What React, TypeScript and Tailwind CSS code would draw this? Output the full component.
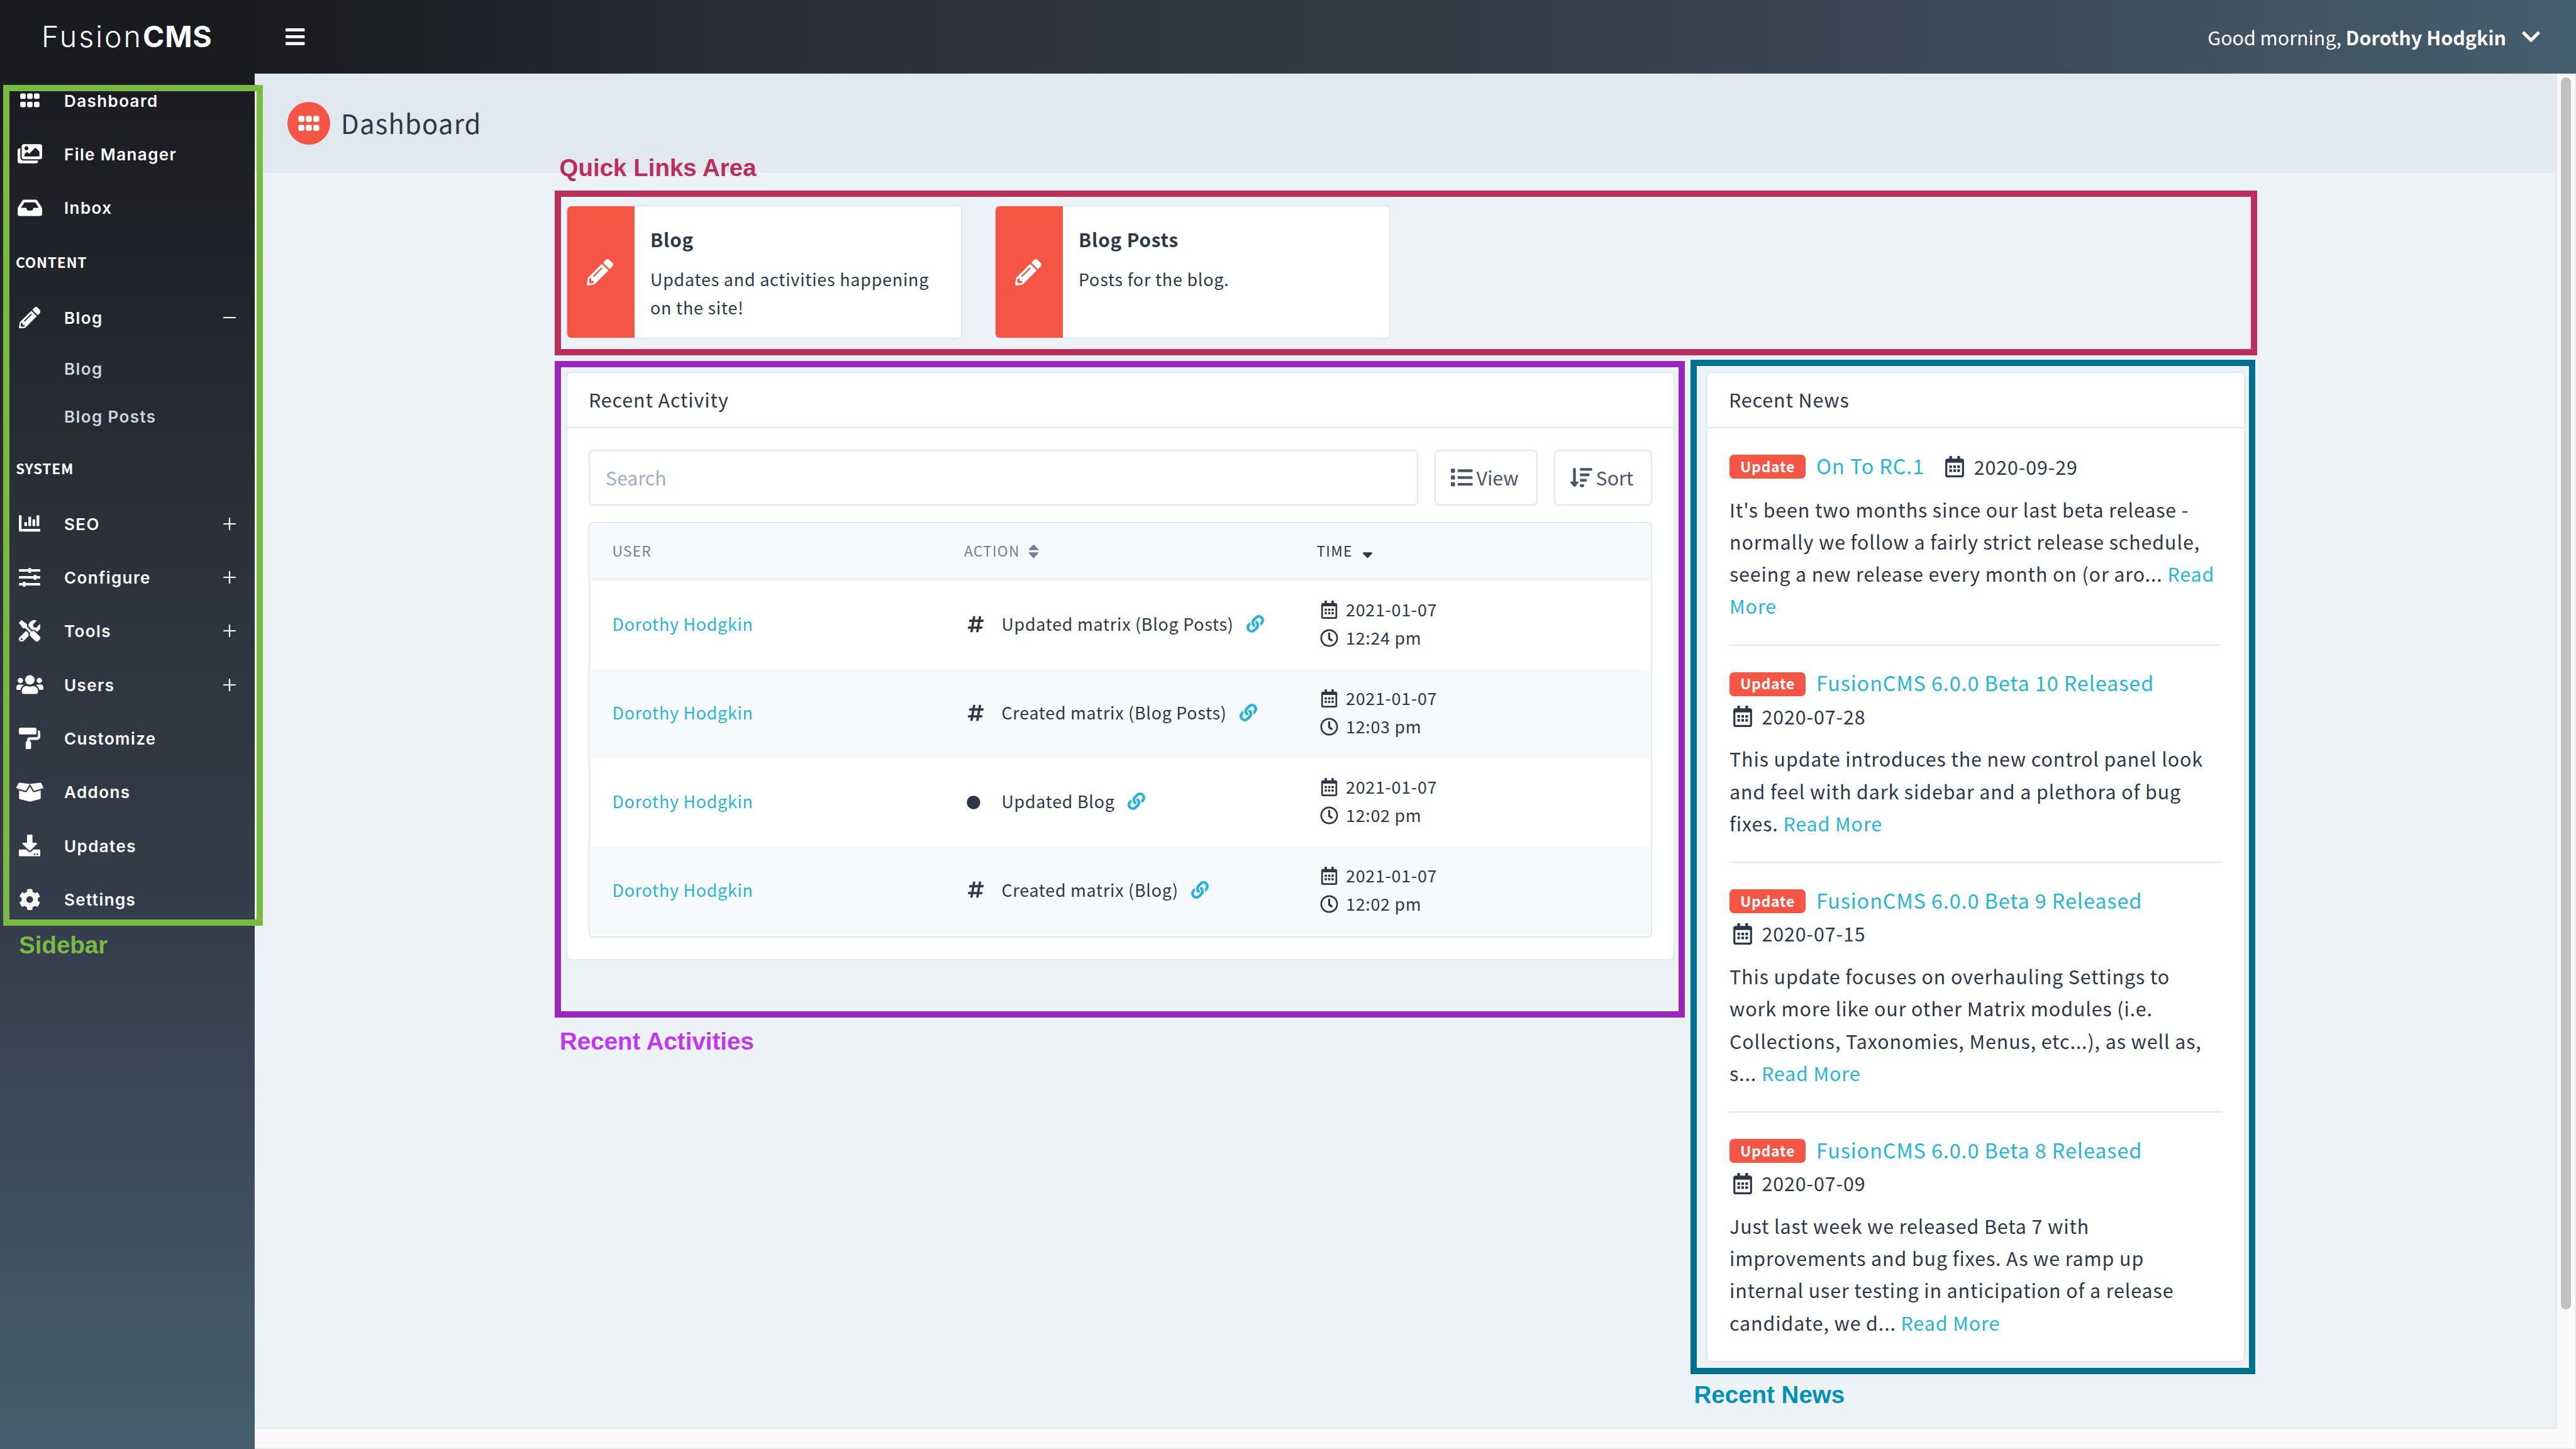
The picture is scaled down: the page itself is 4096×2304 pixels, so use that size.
import type { ReactNode } from "react";
import {
  FaBars,
  FaBoxOpen,
  FaChartBar,
  FaChevronDown,
  FaCircle,
  FaCog,
  FaDownload,
  FaGripHorizontal,
  FaHashtag,
  FaImages,
  FaInbox,
  FaLink,
  FaList,
  FaPaintRoller,
  FaPencilAlt,
  FaRegCalendarAlt,
  FaRegClock,
  FaSort,
  FaSortAmountDown,
  FaSortDown,
  FaTools,
  FaUsers,
} from "react-icons/fa";

type NavEntry = {
  label: string;
  icon: ReactNode;
  toggle?: "open" | "closed";
  children?: string[];
};

type Activity = {
  icon: "hash" | "dot";
  action: string;
  date: string;
  time: string;
};

type NewsEntry = {
  title: string;
  date: string;
  body: string;
};

const user = "Dorothy Hodgkin";

function SlidersIcon() {
  return (
    <svg viewBox="0 0 34 30" className="h-[30px] w-[34px]" fill="currentColor">
      <rect x="0" y="2" width="34" height="4" rx="1" />
      <rect x="0" y="13" width="34" height="4" rx="1" />
      <rect x="0" y="24" width="34" height="4" rx="1" />
      <rect x="15" y="0" width="4.4" height="8" rx="1" />
      <rect x="23.6" y="11" width="4.4" height="8" rx="1" />
      <rect x="6.4" y="22" width="4.4" height="8" rx="1" />
    </svg>
  );
}

const mainNav: NavEntry[] = [
  { label: "Dashboard", icon: <FaGripHorizontal className="size-[35px]" /> },
  { label: "File Manager", icon: <FaImages className="size-[39px]" /> },
  { label: "Inbox", icon: <FaInbox className="size-[39px]" /> },
];

const contentNav: NavEntry[] = [
  {
    label: "Blog",
    icon: <FaPencilAlt className="size-[34.6px]" />,
    toggle: "open",
    children: ["Blog", "Blog Posts"],
  },
];

const systemNav: NavEntry[] = [
  { label: "SEO", icon: <FaChartBar className="size-[34.6px]" />, toggle: "closed" },
  { label: "Configure", icon: <SlidersIcon />, toggle: "closed" },
  { label: "Tools", icon: <FaTools className="size-[34.6px]" />, toggle: "closed" },
  { label: "Users", icon: <FaUsers className="size-[43px]" />, toggle: "closed" },
  { label: "Customize", icon: <FaPaintRoller className="size-[34.6px]" /> },
  { label: "Addons", icon: <FaBoxOpen className="size-[43px]" /> },
  { label: "Updates", icon: <FaDownload className="size-[34.6px]" /> },
  { label: "Settings", icon: <FaCog className="size-[34.6px]" /> },
];

const quickLinks = [
  { title: "Blog", text: "Updates and activities happening on the site!" },
  { title: "Blog Posts", text: "Posts for the blog." },
];

const activities: Activity[] = [
  { icon: "hash", action: "Updated matrix (Blog Posts)", date: "2021-01-07", time: "12:24 pm" },
  { icon: "hash", action: "Created matrix (Blog Posts)", date: "2021-01-07", time: "12:03 pm" },
  { icon: "dot", action: "Updated Blog", date: "2021-01-07", time: "12:02 pm" },
  { icon: "hash", action: "Created matrix (Blog)", date: "2021-01-07", time: "12:02 pm" },
];

const news: NewsEntry[] = [
  {
    title: "On To RC.1",
    date: "2020-09-29",
    body: "It's been two months since our last beta release - normally we follow a fairly strict release schedule, seeing a new release every month on (or aro...",
  },
  {
    title: "FusionCMS 6.0.0 Beta 10 Released",
    date: "2020-07-28",
    body: "This update introduces the new control panel look and feel with dark sidebar and a plethora of bug fixes.",
  },
  {
    title: "FusionCMS 6.0.0 Beta 9 Released",
    date: "2020-07-15",
    body: "This update focuses on overhauling Settings to work more like our other Matrix modules (i.e. Collections, Taxonomies, Menus, etc...), as well as, s...",
  },
  {
    title: "FusionCMS 6.0.0 Beta 8 Released",
    date: "2020-07-09",
    body: "Just last week we released Beta 7 with improvements and bug fixes. As we ramp up internal user testing in anticipation of a release candidate, we d...",
  },
];

function Toggle({ state }: { state: "open" | "closed" }) {
  return (
    <svg viewBox="0 0 20 20" className="ml-auto size-5" stroke="currentColor" strokeWidth="2.2" strokeLinecap="round">
      <path d="M1 10h18" />
      {state === "closed" && <path d="M10 1v18" />}
    </svg>
  );
}

function NavList({ items }: { items: NavEntry[] }) {
  return (
    <ul className="font-['Inter',sans-serif] text-[26px] font-semibold tracking-[1.4px]">
      {items.map((item) => (
        <li key={item.label}>
          <a className="flex h-[85.33px] items-center pr-[30px] pl-5">
            <span className="flex w-[54px] shrink-0 justify-center">{item.icon}</span>
            <span className="ml-[28px] pt-px">{item.label}</span>
            {item.toggle && <Toggle state={item.toggle} />}
          </a>
          {item.children && (
            <ul className="text-[#cbd5e0]">
              {item.children.map((child) => (
                <li key={child} className="flex h-[76.6px] items-center pt-px pl-[102px]">
                  {child}
                </li>
              ))}
            </ul>
          )}
        </li>
      ))}
    </ul>
  );
}

function NavHeading({ children }: { children: ReactNode }) {
  return (
    <h2 className="flex h-[89.2px] items-center pl-[25px] text-[22.8px] font-bold tracking-[0.7px] uppercase">
      {children}
    </h2>
  );
}

function Sidebar() {
  return (
    <aside className="h-full w-[405px] shrink-0 bg-[linear-gradient(to_bottom,#1a1b1f_5%,#262a31_27%,#2e343e_42%,#353d4c_64%,#455d6c_98%)] text-white">
      <div className="flex h-[117px] items-center pl-[66px] font-['Inter',sans-serif] text-[46.5px] leading-none">
        <span className="font-light tracking-[3px]">Fusion</span>
        <span className="font-bold tracking-[0.8px]">CMS</span>
      </div>
      <nav>
        <NavList items={mainNav} />
        <NavHeading>Content</NavHeading>
        <NavList items={contentNav} />
        <NavHeading>System</NavHeading>
        <NavList items={systemNav} />
      </nav>
    </aside>
  );
}

function TopBar() {
  return (
    <header className="flex h-[117px] shrink-0 items-center bg-[linear-gradient(to_right,#1a1c20_2%,#2b3038_24%,#333a46_49%,#3a4655_70%,#455e6e_100%)] pr-[57px] pl-[49px] text-[30.4px] text-white">
      <FaBars className="h-[34.8px] w-[30.5px]" />
      <p className="ml-auto pt-[2px] whitespace-pre">
        Good morning, <b>{user}</b>
      </p>
      <FaChevronDown className="ml-[25px] h-[33px] w-[29px]" />
    </header>
  );
}

function QuickLink({ title, text }: { title: string; text: string }) {
  return (
    <article className="flex h-[213px] w-[630px] overflow-hidden rounded-lg border-2 border-[#e2e8f0] bg-white">
      <div className="flex w-[107px] shrink-0 items-center justify-center bg-[#f55544] pr-[4px] text-white">
        <FaPencilAlt className="size-[42px]" />
      </div>
      <div className="pt-[31px] pr-5 pl-[25px]">
        <h3 className="text-[29.6px] leading-[44px] font-bold tracking-[0.85px]">{title}</h3>
        <p className="mt-[19px] text-[26.9px] leading-[44.6px] tracking-[0.77px]">{text}</p>
      </div>
    </article>
  );
}

function Card({ title, className, children }: { title: string; className: string; children: ReactNode }) {
  return (
    <section className={`rounded-lg border-2 border-[#e2e8f0] bg-white ${className}`}>
      <h2 className="flex h-[88px] items-center border-b-2 border-[#e2e8f0] pl-[34px] text-[30.4px] tracking-[0.9px]">
        {title}
      </h2>
      {children}
    </section>
  );
}

const columns = "grid grid-cols-[559px_562px_1fr]";

function ActivityRow({ item, striped }: { item: Activity; striped: boolean }) {
  return (
    <div
      className={`${columns} h-[140.8px] items-center pb-[3px] text-[26.8px] tracking-[0.76px] ${
        striped ? "bg-[#f7fafc]" : ""
      }`}
    >
      <a className="pl-[33.5px] text-[#28b4d4]">{user}</a>
      <div className="flex items-center pl-[34px]">
        <span className="flex w-9 justify-center">
          {item.icon === "hash" ? (
            <FaHashtag className="size-[29px]" />
          ) : (
            <FaCircle className="mt-1 mr-[6px] size-[22px]" />
          )}
        </span>
        <span className="ml-[23.5px]">{item.action}</span>
        <FaLink className="ml-[20px] size-7 text-[#28b4d4]" />
      </div>
      <div className="pl-[34px] leading-[44.8px]">
        <p className="flex items-center">
          <span className="mr-[9px] flex w-9 justify-center">
            <FaRegCalendarAlt className="size-[29px]" />
          </span>
          {item.date}
        </p>
        <p className="flex items-center">
          <span className="mr-[9px] flex w-9 justify-center">
            <FaRegClock className="size-[29px]" />
          </span>
          {item.time}
        </p>
      </div>
    </div>
  );
}

function RecentActivity() {
  return (
    <Card title="Recent Activity" className="h-[936px] w-[1763px]">
      <div className="px-[34px] pt-[34px]">
        <div className="flex h-[89px] gap-[26px] text-[30.3px] text-[#4a5568]">
          <div className="flex flex-1 items-center rounded-lg border-2 border-[#e2e8f0] pl-[25px] text-[#a0aec0]">
            Search
          </div>
          <button className="flex w-[164px] items-center gap-[6px] rounded-lg border-2 border-[#e2e8f0] pl-[24px]">
            <FaList className="size-[34.6px]" />
            View
          </button>
          <button className="flex w-[156px] items-center gap-[6px] rounded-lg border-2 border-[#e2e8f0] pl-[24px]">
            <FaSortAmountDown className="size-[34.6px]" />
            Sort
          </button>
        </div>
        <div className="mt-[26px] rounded-lg border-2 border-[#e2e8f0] p-[2px]">
          <div
            className={`${columns} h-[89.4px] items-center border-b-4 border-[#edf2f7] bg-[#f7fafc] pb-px text-[22.8px] tracking-[1.2px] text-[#718096] uppercase`}
          >
            <span className="pl-[33.5px]">User</span>
            <span className="flex items-center gap-[13px] pl-[34px]">
              Action
              <FaSort className="h-[27px] w-[17px]" />
            </span>
            <span className="flex items-center gap-[15px] pl-[32.5px] text-[#2d3748]">
              Time
              <FaSortDown className="h-[27px] w-[17px]" />
            </span>
          </div>
          {activities.map((item, i) => (
            <ActivityRow key={i} item={item} striped={i % 2 === 1} />
          ))}
        </div>
      </div>
    </Card>
  );
}

function NewsItem({ item }: { item: NewsEntry }) {
  return (
    <article className="border-b-2 border-[#e2e8f0] pt-[35.7px] pb-[34.8px] text-[30.4px] leading-[51.3px] tracking-[0.9px] last:border-b-0">
      <div className="flex flex-wrap items-center">
        <span className="mr-[17px] flex h-[38px] w-[121px] items-center justify-center rounded-[7px] bg-[#f55544] pb-[2px] text-[23.2px] font-bold tracking-[0.64px] text-white">
          Update
        </span>
        <a className="h-[51.3px] pr-[27px] text-[32.4px] leading-[45.5px] text-[#28b4d4]">{item.title}</a>
        <span className="flex items-center">
          <span className="mr-[9px] flex w-[42.5px] justify-center">
            <FaRegCalendarAlt className="size-[34px]" />
          </span>
          {item.date}
        </span>
      </div>
      <p className="mt-[16.6px] pr-[6px]">
        {item.body} <a className="text-[#28b4d4]">Read More</a>
      </p>
    </article>
  );
}

function RecentNews() {
  return (
    <Card title="Recent News" className="w-[857px]">
      <div className="px-[35px]">
        {news.map((item) => (
          <NewsItem key={item.title} item={item} />
        ))}
      </div>
    </Card>
  );
}

// Coloured frames and captions that point out each area of the panel
function Annotations() {
  return (
    <div className="pointer-events-none absolute inset-0 font-['Liberation_Sans',sans-serif] text-[38.5px] leading-[40px] font-bold">
      <div className="absolute top-[135px] left-[5px] h-[1337px] w-[413px] border-[10px] border-[#79bb42]" />
      <p className="absolute top-[1483px] left-[30px] text-[#79bb42]">Sidebar</p>
      <div className="absolute top-[303px] left-[882px] h-[262px] w-[2707px] border-[10px] border-[#ba2e5b]" />
      <p className="absolute top-[247px] left-[889.5px] text-[#ba2e5b]">Quick Links Area</p>
      <div className="absolute top-[574px] left-[882px] h-[1044px] w-[1797px] border-[10px] border-[#9a27bd]" />
      <p className="absolute top-[1636px] left-[890px] text-[#c137f0]">Recent Activities</p>
      <div className="absolute top-[572px] left-[2688px] h-[1613px] w-[898px] border-[10px] border-[#00708f]" />
      <p className="absolute top-[2198px] left-[2693.5px] text-[#0090b5]">Recent News</p>
    </div>
  );
}

export default function App() {
  return (
    <div className="relative flex h-[2304px] w-[4096px] overflow-hidden bg-[#edf2f7] font-['Noto_Sans_CJK_JP',sans-serif] text-[#2d3748]">
      <Sidebar />
      <div className="flex flex-1 flex-col">
        <TopBar />
        <div className="flex flex-1 border-r-2 border-b-2 border-[#ededed] bg-[#fafafa]">
          <main className="mb-[30px] w-[3661px] border-r-2 border-b-2 border-[#e6e8eb] bg-[#edf2f7]">
            <div className="flex h-[158px] items-center bg-[#e2e8f0] pl-[52px]">
              <span className="flex size-[68px] items-center justify-center rounded-full bg-[#f55544] text-white">
                <FaGripHorizontal className="size-[38px]" />
              </span>
              <h1 className="ml-[17px] pb-[2px] text-[41.8px] tracking-[1.2px]">Dashboard</h1>
            </div>
            <div className="pt-[51px] pl-[495px]">
              <div className="flex gap-[51px]">
                {quickLinks.map((link) => (
                  <QuickLink key={link.title} {...link} />
                ))}
              </div>
              <div className="mt-[52px] flex items-start gap-[50px]">
                <RecentActivity />
                <RecentNews />
              </div>
            </div>
          </main>
          <div className="flex-1 px-[6px] pt-[6px]">
            <div className="h-[1959px] rounded-full bg-[#c1c1c1]" />
          </div>
        </div>
      </div>
      <Annotations />
    </div>
  );
}
